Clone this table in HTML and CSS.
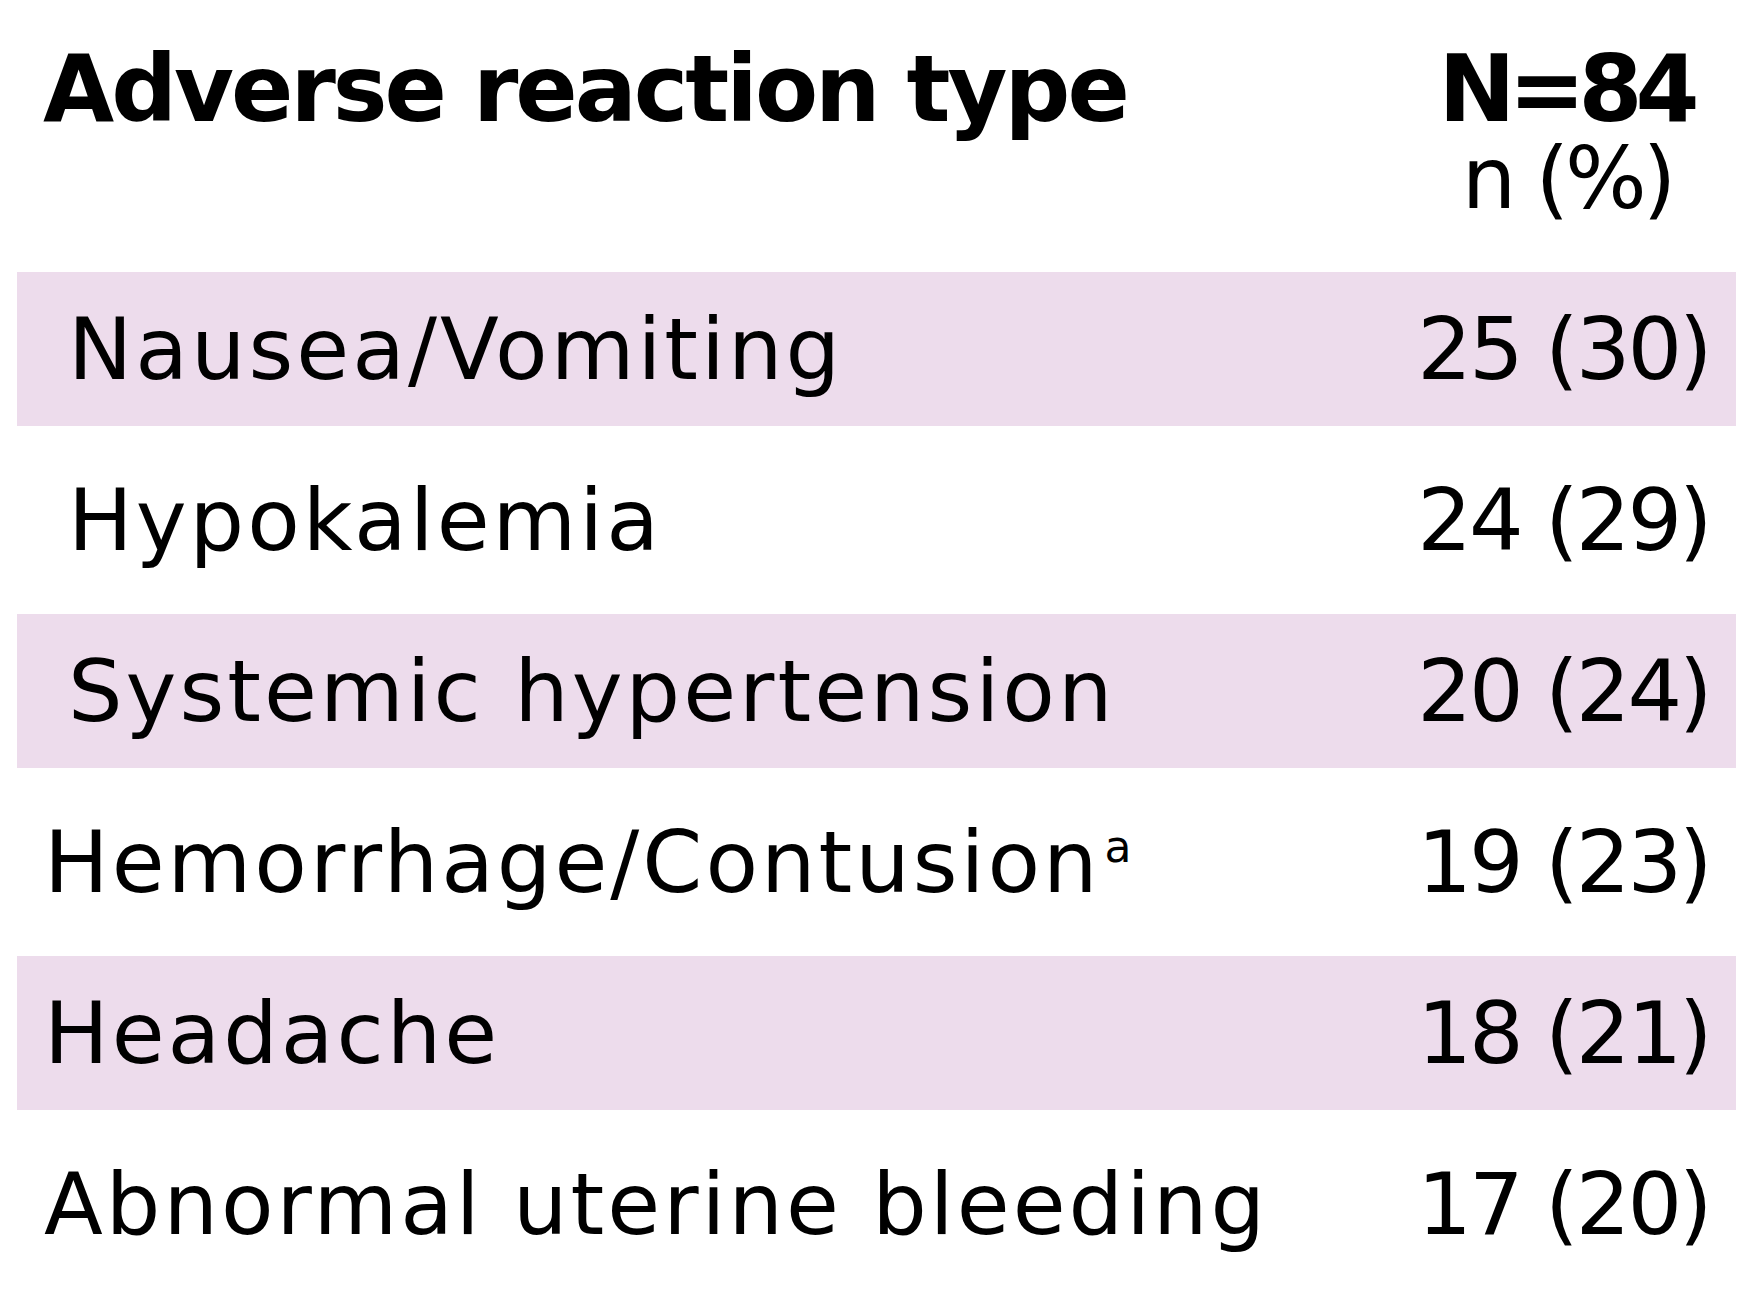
FILE: index.html
```html
<!DOCTYPE html>
<html lang="en">
<head>
<meta charset="utf-8">
<title>Adverse reaction type</title>
<link rel="stylesheet" href="styles.css">
</head>
<body>
<div class="table">
  <div class="head">
    <div class="title">Adverse reaction type</div>
    <div class="count">
      <div class="big-n">N=84</div>
      <div class="unit">n (%)</div>
    </div>
  </div>
  <div class="row shaded indent"><div class="label">Nausea/Vomiting</div><div class="val">25 (30)</div></div>
  <div class="row indent"><div class="label">Hypokalemia</div><div class="val">24 (29)</div></div>
  <div class="row shaded indent"><div class="label">Systemic hypertension</div><div class="val">20 (24)</div></div>
  <div class="row"><div class="label">Hemorrhage/Contusion<span class="sup">a</span></div><div class="val">19 (23)</div></div>
  <div class="row shaded"><div class="label">Headache</div><div class="val">18 (21)</div></div>
  <div class="row"><div class="label">Abnormal uterine bleeding</div><div class="val">17 (20)</div></div>
</div>
</body>
</html>
```
FILE: styles.css
```css
html, body {
  margin: 0;
  background: #ffffff;
}
body {
  font-family: "DejaVu Sans", sans-serif;
  color: #000000;
  width: 1750px;
  height: 1300px;
  overflow: hidden;
}
.table {
  display: flex;
  flex-direction: column;
  gap: 17px;
  margin: 0 14px 0 17px;
  padding-top: 44px;
}
.head {
  display: grid;
  grid-template-columns: 1fr 300px;
  padding: 0 24px 0 26px;
  margin-bottom: 35px;
}
.title {
  font-weight: bold;
  font-size: 92px;
  line-height: 92px;
  letter-spacing: -3px;
  white-space: nowrap;
}
.count {
  text-align: center;
}
.big-n {
  font-weight: bold;
  font-size: 92px;
  line-height: 92px;
  letter-spacing: -7px;
  margin-right: -7px;
}
.unit {
  font-size: 86px;
  line-height: 84px;
  letter-spacing: -4px;
  margin-right: -4px;
  padding-left: 6px;
}
.row {
  display: grid;
  grid-template-columns: 1fr 300px;
  align-items: center;
  height: 154px;
  padding: 0 24px 0 27px;
  font-size: 86px;
}
.row.indent {
  padding-left: 51px;
}
.row.shaded {
  background: #eddcec;
}
.label {
  letter-spacing: 3px;
  white-space: nowrap;
}
.val {
  text-align: center;
  letter-spacing: -3px;
  margin-right: -3px;
  white-space: nowrap;
}
.sup {
  font-size: 44px;
  vertical-align: 30px;
  letter-spacing: 0;
  margin-left: 4px;
}
```
